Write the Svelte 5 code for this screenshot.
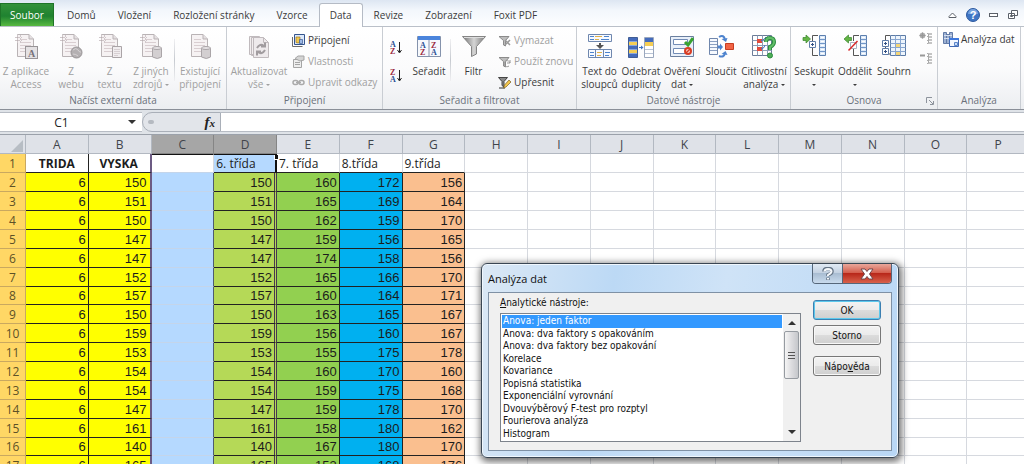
<script>
	const tabs = ['Domů', 'Vložení', 'Rozložení stránky', 'Vzorce', 'Data', 'Revize', 'Zobrazení', 'Foxit PDF'];
	const columns = 'ABCDEFGHIJKLMNOP'.split('');
	const data = [
		[6, 150, '', 150, 160, 172, 156],
		[6, 151, '', 151, 165, 169, 164],
		[6, 150, '', 150, 162, 159, 170],
		[6, 147, '', 147, 159, 156, 165],
		[6, 147, '', 147, 174, 158, 156],
		[6, 152, '', 152, 165, 166, 170],
		[6, 157, '', 157, 160, 164, 171],
		[6, 150, '', 150, 163, 165, 167],
		[6, 159, '', 159, 156, 160, 167],
		[6, 153, '', 153, 155, 175, 178],
		[6, 154, '', 154, 160, 170, 160],
		[6, 154, '', 154, 159, 175, 168],
		[6, 147, '', 147, 159, 178, 170],
		[6, 161, '', 161, 158, 180, 162],
		[6, 140, '', 140, 167, 180, 170],
		[6, 165, '', 165, 153, 168, 176]
	];
	const heads = ['TRIDA', 'VYSKA', '', '6. třída', '7. třída', '8.třída', '9.třída'];
	const tools = [
		'Anova: jeden faktor',
		'Anova: dva faktory s opakováním',
		'Anova: dva faktory bez opakování',
		'Korelace',
		'Kovariance',
		'Popisná statistika',
		'Exponenciální vyrovnání',
		'Dvouvýběrový F-test pro rozptyl',
		'Fourierova analýza',
		'Histogram'
	];

	let activeTab = $state('Data');
	let tool = $state(tools[0]);
	let cellName = $state('C1');
	let formula = $state('');
</script>

{#snippet sheetIcon(kind)}
	<svg width="24" height="26" viewBox="0 0 24 26" fill="none" stroke="#b9b3b5">
		<path d="M3.500 .5H15l4.500 4.500V22.500H3.500z" fill="#f6f2f3" />
		<path d="M15 .5V5h4.500" fill="#e5e0e2" />
		<path d="M6 8.500h11M6 11.500h11M6 14.500h11M6 17.500h11M6 5.500h7" stroke="#d9ced1" />
		{#if kind !== 'existing'}
			<path d="M1 3.500h7M1 6.500h7M3.500 1v8M6.500 1v8" stroke="#cfc6c9" stroke-dasharray="2 1" />
		{/if}
		{#if kind === 'access'}
			<rect x="11.500" y="12.500" width="12" height="12" fill="#e4e1e3" stroke="#989497" />
			<text x="17.500" y="22.500" text-anchor="middle" class="icon-letter" fill="#77727a" stroke="none">A</text>
		{:else if kind === 'web'}
			<circle cx="17.500" cy="18.500" r="5.500" fill="#b4b0b2" stroke="#989496" />
			<path d="M14 16q3-3 5 0t3 2M14 20q3 0 5 2" stroke="#d6d2d4" />
		{:else if kind === 'text'}
			<path d="M14.500 12.500h9v11h-9z" fill="#f1edef" stroke="#aaa4a7" />
			<path d="M16 15.500h6M16 17.500h6M16 19.500h6M16 21.500h4" stroke="#d8d0d3" />
		{:else}
			<path d="M13.500 14v9q5 3 9 0v-9" fill="#d3cfd1" stroke="#aaa5a8" />
			<ellipse cx="18" cy="14" rx="4.500" ry="1.500" fill="#e6e2e4" stroke="#aaa5a8" />
		{/if}
	</svg>
{/snippet}

{#snippet sortIcon(first, second)}
	<svg width="13" height="16" viewBox="0 0 13 16">
		<text x="0" y="8" class="sort-letter" fill={first === 'A' ? '#2c4f95' : '#9b2b3f'}>{first}</text>
		<text x="0" y="15" class="sort-letter" fill={second === 'A' ? '#2c4f95' : '#9b2b3f'}>{second}</text>
		<path d="M9.500 3v10M7.500 11l2 3 2-3" fill="none" stroke="#222" />
	</svg>
{/snippet}

{#snippet funnel()}
	<path d="M1 2.500h10L7.500 6.500V12l-2-1V6.500z" fill="#bdbdbd" stroke="#8b8b8b" />
{/snippet}

{#snippet outlineIcon(kind)}
	<svg width="24" height="26" viewBox="0 0 24 26" fill="none">
		{#if kind === 'sum'}
			<path d="M8.500 1.500h15v20h-15z" fill="#eef5fc" stroke="#5c7ba5" />
			<path d="M8.500 5.500h15M8.500 9.500h15M8.500 13.500h15M8.500 17.500h15M13.500 1.500v20M18.500 1.500v20" stroke="#88a6cf" />
			<path d="M14 10h4v3h-4zM14 18h4v3h-4z" fill="#f3d577" />
			<path d="M8 1.500H3.500V20H8" stroke="#555" />
			<path d="M.5 6.500h6v6h-6zM.5 14.500h6v6h-6z" fill="#fff" stroke="#617da8" />
			<path d="M2 9.500h3M3.500 8v3M2 17.500h3M3.500 16v3" stroke="#335083" />
		{:else}
			<path d="M17.500 1.500h6v20h-6z" fill="#dce9f8" stroke="#5c7fae" />
			<path d="M17.500 5.500h6M17.500 9.500h6M17.500 13.500h6M17.500 17.500h6" stroke="#7196c7" />
			<path d="M19 3.500h3M19 7.500h3M19 11.500h3M19 15.500h3M19 19.500h3" stroke="#fff" />
			<path d="M16 1.500h-5.500V7M10.500 14v7.500H16" stroke="#555" />
			{#if kind === 'group'}
				<path d="M1 3.500h3V1l4.500 4L4 9V6.500H1z" fill="#64b545" stroke="#38842b" stroke-width=".7" />
				<path d="M7.500 7.500h6v6h-6z" fill="#fff" stroke="#6380aa" />
				<path d="M9 10.500h3M10.500 9v3" stroke="#335083" />
			{:else}
				<path d="M8.500 3.500h-3V1L1 5l4.500 4V6.500h3z" fill="#64b545" stroke="#38842b" stroke-width=".7" />
				<path d="M7.500 8.500h6v6h-6z" fill="#fff" stroke="#aab3c0" />
				<path d="M5.500 16.500 14.500 7" stroke="#d92c2c" stroke-width="1.500" />
			{/if}
		{/if}
	</svg>
{/snippet}

{#snippet detailIcon(minus)}
	<svg width="13" height="13" viewBox="0 0 13 13" fill="none" stroke="#aaa">
		<path d="M8 1.500h1.500v10H8M9.500 4.500H8M9.500 8.500H8" />
		<path d="M10 1h3v2h-3zM10 4h3v2h-3zM10 7h3v2h-3zM10 10h3v2h-3z" fill="#c4c4c4" stroke="none" />
		{#if minus}
			<path d="M1 3.500h5" stroke="#999" stroke-width="2" />
		{:else}
			<circle cx="3.500" cy="3.500" r="2.500" fill="#aaa" />
			<path d="M.5 3.500h6M3.500 .5v6" stroke="#999" />
		{/if}
	</svg>
{/snippet}

<div class="excel">
	<nav class="tabs">
		<button class="file" type="button">Soubor</button>
		{#each tabs as tab}
			<button class="tab" class:active={tab === activeTab} type="button" onclick={() => (activeTab = tab)}>{tab}</button>
		{/each}
		<div class="window-tools">
			<button type="button" aria-label="Minimalizovat pás karet">
				<svg width="9" height="8" viewBox="0 0 9 8"><path d="M1 5.500 4.500 2 8 5.500v1H1z" fill="#fff" stroke="#5b6069" /></svg>
			</button>
			<button type="button" aria-label="Nápověda k aplikaci">
				<svg width="14" height="14" viewBox="0 0 14 14">
					<circle cx="7" cy="7" r="6.500" fill="#3f76c4" stroke="#2e5a9e" />
					<path d="M2 6a5 5 0 0 1 10 0z" fill="#78a4df" />
					<text x="7" y="11" text-anchor="middle" class="help-letter" fill="#fff">?</text>
				</svg>
			</button>
			<button type="button" aria-label="Minimalizovat okno">
				<svg width="10" height="6" viewBox="0 0 10 6"><rect x=".5" y="1.500" width="8" height="3" fill="#fff" stroke="#5b6069" /></svg>
			</button>
			<button type="button" aria-label="Obnovit okno">
				<svg width="11" height="10" viewBox="0 0 11 10" fill="#fff" stroke="#5b6069"><path d="M3.500 .5h6v5h-6zM.5 3.500h6v5h-6z" /><path d="M2.500 5.500h2v1h-2z" /></svg>
			</button>
		</div>
	</nav>

	<div class="ribbon">
		<section class="group external">
			<div class="items">
				<button class="big" type="button" disabled>{@render sheetIcon('access')}<span>Z aplikace<br />Access</span></button>
				<button class="big" type="button" disabled>{@render sheetIcon('web')}<span>Z<br />webu</span></button>
				<button class="big" type="button" disabled>{@render sheetIcon('text')}<span>Z<br />textu</span></button>
				<button class="big" type="button" disabled>{@render sheetIcon('other')}<span>Z jiných<br />zdrojů <i class="caret"></i></span></button>
				<i class="divider"></i>
				<button class="big" type="button" disabled>{@render sheetIcon('existing')}<span>Existující<br />připojení</span></button>
			</div>
			<h2>Načíst externí data</h2>
		</section>

		<section class="group connections">
			<div class="items">
				<button class="big" type="button" disabled>
					<svg width="24" height="26" viewBox="0 0 24 26" fill="none" stroke="#c0babd">
						<path d="M2.500 2.500h10v18h-10zM4.500 3.500h11v18h-11z" fill="#f2eeef" />
						<path d="M6.500 3.500h10l5 5v15h-15z" fill="#eeeaec" />
						<path d="M16.500 3.500v5h5" />
						<path d="M10 14q3-5 7-2M18 8.500v4h-4M18 16q-3 5-7 2M10 21.500v-4h4" stroke="#a19c9f" stroke-width="2" />
					</svg>
					<span>Aktualizovat<br />vše <i class="caret"></i></span>
				</button>
				<div class="stack">
					<button class="small" type="button">
						<svg width="13" height="13" viewBox="0 0 13 13">
							<path d="M2.500 .5h10v10h-10z" fill="#dce8fa" stroke="#34558d" />
							<path d="M.5 3v9.500h10" fill="none" stroke="#6d6d6d" />
							<path d="M4 3v5.500q2 1 4 0V3z" fill="#f0c850" stroke="#a17c22" stroke-width=".7" />
							<path d="M7.500 5.500h3v4h-3z" fill="#9db9e6" stroke="#3c5a94" stroke-width=".7" />
						</svg>
						Připojení
					</button>
					<button class="small" type="button" disabled>
						<svg width="13" height="13" viewBox="0 0 13 13" fill="#d4d4d4" stroke="#a5a5a5">
							<path d="M1.500 4.500h8v8h-8z" fill="#eee" /><path d="M3 7.500h5M3 9.500h5" /><path d="M3 3.500 6 1h6v4l-4 1z" />
						</svg>
						Vlastnosti
					</button>
					<button class="small" type="button" disabled>
						<svg width="13" height="13" viewBox="0 0 13 13" fill="none" stroke="#aaa" stroke-width="1.500">
							<rect x="1" y="4.500" width="5" height="4" rx="2" /><rect x="7" y="4.500" width="5" height="4" rx="2" /><path d="M4 6.500h5" />
						</svg>
						Upravit odkazy
					</button>
				</div>
			</div>
			<h2>Připojení</h2>
		</section>

		<section class="group sort">
			<div class="items">
				<div class="sorters">
					<button type="button" aria-label="Seřadit od A do Z">{@render sortIcon('A', 'Z')}</button>
					<button type="button" aria-label="Seřadit od Z do A">{@render sortIcon('Z', 'A')}</button>
				</div>
				<button class="big" type="button">
					<svg width="24" height="26" viewBox="0 0 24 26">
						<path d="M.5 2.500h23v20H.5z" fill="#f7f9fd" stroke="#8593ac" />
						<path d="M1 2h22v4H1z" fill="#4a84dc" />
						<path d="M12 6v16" stroke="#8593ac" />
						<text x="3" y="14" class="sort-letter" fill="#2c4f95">A</text><text x="3" y="21" class="sort-letter" fill="#9b2b3f">Z</text>
						<text x="14" y="14" class="sort-letter" fill="#9b2b3f">Z</text><text x="14" y="21" class="sort-letter" fill="#2c4f95">A</text>
					</svg>
					<span>Seřadit</span>
				</button>
				<i class="divider"></i>
				<button class="big" type="button">
					<svg width="24" height="26" viewBox="0 0 24 26">
						<defs><linearGradient id="funnel"><stop stop-color="#707070" /><stop offset=".5" stop-color="#d5d5d5" /><stop offset="1" stop-color="#777" /></linearGradient></defs>
						<path d="M.5 2.500h23l-9 10V20l-5 2.500v-10z" fill="url(#funnel)" stroke="#858585" />
						<path d="M2 3.500h20" stroke="#ddd" />
					</svg>
					<span>Filtr</span>
				</button>
				<div class="stack">
					<button class="small" type="button" disabled>
						<svg width="13" height="13" viewBox="0 0 13 13">{@render funnel()}<path d="m7 6 5 5m0-5-5 5" stroke="#999" stroke-width="1.500" /></svg>
						Vymazat
					</button>
					<button class="small" type="button" disabled>
						<svg width="13" height="13" viewBox="0 0 13 13">{@render funnel()}<path d="M12 8a3 3 0 1 0-1 3M12 5v3H9" fill="none" stroke="#999" /></svg>
						Použít znovu
					</button>
					<button class="small" type="button">
						<svg width="13" height="13" viewBox="0 0 13 13">
							<path d="M.5 1.500h9L6 5.500V11L4 9.500v-4z" fill="#888" stroke="#444" /><path d="M1 12h6" stroke="#333" />
							<path d="m5.500 12 1-3 4.500-5 2 2-5 5z" fill="#f3c64c" stroke="#7a6022" stroke-width=".7" />
						</svg>
						Upřesnit
					</button>
				</div>
			</div>
			<h2>Seřadit a filtrovat</h2>
		</section>

		<section class="group datatools">
			<div class="items">
				<button class="big" type="button">
					<svg width="24" height="26" viewBox="0 0 24 26" fill="#f7faff" stroke="#6f87ae">
						<path d="M.5 .5h23v7H.5zM.5 15.500h23v8H.5z" />
						<path d="M2 2.500h4M16 2.500h5M2 5.500h4M13 5.500h8M2 18.500h4M17 18.500h5M2 21.500h4M17 21.500h4" stroke="#4d84ce" />
						<path d="M7 2.500h7M7 5.500h4M9 18.500h5M9 21.500h4" stroke="#e0b14b" />
						<path d="M7.500 16v7M15.500 16v7" />
						<path d="M11 9h2v2h3l-4 4-4-4h3z" fill="#555" stroke="none" />
					</svg>
					<span>Text do<br />sloupců</span>
				</button>
				<button class="big" type="button">
					<svg width="26" height="26" viewBox="0 0 26 26">
						<path d="M.5 3.500h9v20h-9z" fill="#446bbc" stroke="#405d94" />
						<path d="M1 8h8v3H1zM1 16h8v3H1z" fill="#f5ce55" />
						<path d="M1 7.500h8M1 11.500h8M1 15.500h8M1 19.500h8" stroke="#8ca8dc" />
						<path d="M16.500 3.500h9v20h-9z" fill="#fff" stroke="#9aa7bd" />
						<path d="M17 4h8v4h-8z" fill="#446bbc" /><path d="M17 8h8v4h-8z" fill="#f5ce55" />
						<path d="M17 15.500h8M17 19.500h8" stroke="#b8c3d5" />
						<path d="M11 13h2v-1.500l2.500 2-2.500 2V14h-2z" fill="#3c73c5" />
					</svg>
					<span>Odebrat<br />duplicity</span>
				</button>
				<button class="big" type="button">
					<svg width="24" height="26" viewBox="0 0 24 26" fill="none">
						<path d="M.5 2.500h23v20H.5z" fill="#e8eff9" stroke="#6a7f9f" />
						<path d="M3.500 5.500h14v5h-14zM3.500 14.500h12v5h-12z" fill="#fff" stroke="#718bb5" />
						<path d="m15 8 3 3 5-7" stroke="#38a330" stroke-width="3" />
						<circle cx="18" cy="17" r="3" fill="#f8d2c8" stroke="#d83d24" stroke-width="2" /><path d="m16 19 4-4" stroke="#d83d24" stroke-width="1.500" />
					</svg>
					<span>Ověření<br />dat <i class="caret"></i></span>
				</button>
				<button class="big" type="button">
					<svg width="26" height="26" viewBox="0 0 26 26" fill="none">
						<path d="M1.500 4.500h8v16h-8z" fill="#f6f9fe" stroke="#7087ad" />
						<path d="M2 7.500h7M2 10.500h7M2 13.500h7M2 16.500h7" stroke="#8ba0c2" />
						<path d="M11 3q5-3 6 3M11 22q5 2 6-3" stroke="#4e83ce" stroke-width="2" />
						<path d="m13.500 5 6-1-1.500 4zM13.500 20l4-3 2 4zM10 11.500h2v-2l3 3.500-3 3.500v-2h-2z" fill="#4e83ce" />
						<path d="M17.500 9.500h8v6h-8z" fill="#f16445" stroke="#c63d22" />
					</svg>
					<span>Sloučit</span>
				</button>
				<button class="big" type="button">
					<svg width="24" height="26" viewBox="0 0 24 26" fill="none">
						<path d="M.5 1.500h19v20H.5z" fill="#fff" stroke="#6b7c98" />
						<path d="M.5 6.500h19M.5 11.500h19M.5 16.500h19M5.500 1.500v20M10.500 1.500v20M15.500 1.500v20" stroke="#8d9db7" />
						<path d="M5 5h5v4H5zM5 13h5v4H5z" fill="#e14a3c" />
						<path d="M9 7q4-2 5-4M9 15q4-1 4-4" stroke="#4472c4" />
						<path d="M14 8q0-4 4-4t4 4q0 3-4 5v3" stroke="#2b8c3e" stroke-width="4" />
						<path d="M14 8q0-4 4-4t4 4q0 3-4 5v3" stroke="#62bd68" stroke-width="2" />
						<circle cx="18" cy="21.500" r="2.500" fill="#4dad57" stroke="#2b8c3e" />
					</svg>
					<span>Citlivostní<br />analýza <i class="caret"></i></span>
				</button>
			</div>
			<h2>Datové nástroje</h2>
		</section>

		<section class="group outline">
			<div class="items">
				<button class="big" type="button">{@render outlineIcon('group')}<span>Seskupit<br /><i class="caret"></i></span></button>
				<button class="big" type="button">{@render outlineIcon('ungroup')}<span>Oddělit<br /><i class="caret"></i></span></button>
				<button class="big" type="button">{@render outlineIcon('sum')}<span>Souhrn</span></button>
				<div class="details">
					<button type="button" aria-label="Zobrazit podrobnosti" disabled>{@render detailIcon(false)}</button>
					<button type="button" aria-label="Skrýt podrobnosti" disabled>{@render detailIcon(true)}</button>
				</div>
			</div>
			<h2>Osnova</h2>
			<button class="launcher" type="button" aria-label="Nastavení osnovy">
				<svg width="8" height="8" viewBox="0 0 8 8" fill="none" stroke="#8d939c"><path d="M.5 6V.5H6M3 3l4 4M7.500 4v3.500H4" /></svg>
			</button>
		</section>

		<section class="group analysis">
			<div class="items">
				<button class="small" type="button">
					<svg width="17" height="16" viewBox="0 0 17 16">
						<path d="M.5 .5h3v11h-3zM3.500 2.500h3v9h-3zM6.500 .5h3v11h-3z" fill="#9db1d3" stroke="#627ba7" />
						<path d="M1 3.500h8M1 6.500h8" stroke="#d7e0ef" />
						<path d="M6.500 6.500h9v8h-9z" fill="#f4f8ff" stroke="#4069b4" /><path d="M6 6h10v2H6z" fill="#3f78dc" /><path d="M11.500 10.500h3v3h-3z" fill="#c7dcfb" stroke="#5d86c8" />
					</svg>
					Analýza dat
				</button>
			</div>
			<h2>Analýza</h2>
		</section>
	</div>

	<div class="formula-bar">
		<div class="name-box">
			<input aria-label="Pole názvů" bind:value={cellName} />
			<button type="button" aria-label="Vybrat název"><i class="arrow"></i></button>
		</div>
		<div class="fx">
			<i class="knob"></i>
			<button type="button" aria-label="Vložit funkci"><em>f</em><em class="sub">x</em></button>
		</div>
		<input class="formula" aria-label="Řádek vzorců" bind:value={formula} />
	</div>

	<div class="sheet">
		<table>
			<thead>
				<tr>
					<th class="corner" aria-label="Vybrat vše"><svg width="12" height="12" viewBox="0 0 12 12"><path d="M12 0v12H0z" fill="#b7bdc4" /></svg></th>
					{#each columns as col}
						<th class:picked={col === 'C' || col === 'D'}>{col}</th>
					{/each}
				</tr>
			</thead>
			<tbody>
				<tr class="heads">
					<th>1</th>
					{#each columns as col, i}
						<td class="col-{col}">{heads[i] ?? ''}{#if col === 'D'}<i class="handle"></i>{/if}</td>
					{/each}
				</tr>
				{#each data as row, r}
					<tr>
						<th>{r + 2}</th>
						{#each columns as col, i}
							<td class="col-{col}">{row[i] ?? ''}</td>
						{/each}
					</tr>
				{/each}
			</tbody>
		</table>
	</div>

	<div class="dialog" role="dialog" aria-labelledby="dialog-title">
		<header>
			<h1 id="dialog-title">Analýza dat</h1>
			<div class="caption">
				<button type="button" aria-label="Kontextová nápověda">
					<svg width="12" height="14" viewBox="0 0 12 14" fill="none"><path d="M2 4.500q0-3 4-3t4 3q0 2-4 3.500V9M6 10.500v2.500" stroke="#667586" stroke-width="3.500" /><path d="M2.500 4.500q0-2.500 3.500-2.500t3.500 2.500Q9.500 6 6 8v1M6 11v1.500" stroke="#f5f8fb" stroke-width="2" /></svg>
				</button>
				<button class="close" type="button" aria-label="Zavřít">
					<svg width="14" height="12" viewBox="0 0 14 12"><path d="M1 1h4l2 2.500L9 1h4L9.500 6l3.500 5H9L7 8.500 5 11H1l3.500-5z" fill="#fff" stroke="#71464a" /></svg>
				</button>
			</div>
		</header>
		<div class="body">
			<div class="list-side">
				<label for="tools"><u>A</u>nalytické nástroje:</label>
				<div class="list">
					<select id="tools" size="10" bind:value={tool}>
						{#each tools as name}
							<option value={name}>{name}</option>
						{/each}
					</select>
					<div class="scroll">
						<button type="button" aria-label="Nahoru"><i class="arrow up"></i></button>
						<div class="thumb"><i></i><i></i><i></i></div>
						<button class="down" type="button" aria-label="Dolů"><i class="arrow"></i></button>
					</div>
				</div>
			</div>
			<div class="actions">
				<button class="default" type="button">OK</button>
				<button type="button">Storno</button>
				<button class="help" type="button">Nápo<u>v</u>ěda</button>
			</div>
		</div>
	</div>
</div>

<style>
	:global(body) {
		margin: 0;
	}
	.excel {
		position: relative;
		height: 100vh;
		overflow: hidden;
		display: flex;
		flex-direction: column;
		background: #fff;
		color: #3b3b3b;
		font: 10px/13px 'Open Sans', 'Noto Sans', sans-serif;
	}
	.excel * {
		box-sizing: border-box;
	}
	button,
	input,
	select {
		margin: 0;
		padding: 0;
		border: 0;
		background: none;
		color: inherit;
		font: inherit;
	}
	svg {
		display: block;
		flex: none;
	}
	h1,
	h2 {
		margin: 0;
		font-size: 10px;
		font-weight: normal;
	}

	.tabs {
		display: flex;
		flex: none;
		align-items: flex-end;
		height: 27px;
		border-bottom: 1px solid #bac0c9;
		background: linear-gradient(#dde6f2, #f3f7fc 40%, #fdfeff);
	}
	.file {
		width: 54px;
		height: 23px;
		margin-right: 2px;
		border: 1px solid #1e7428;
		border-bottom: 0;
		background: linear-gradient(#33913a, #1f8230 55%, #58b941);
		color: #fff;
	}
	.tab {
		height: 23px;
		padding: 0 10px;
		border: 1px solid transparent;
		border-bottom: 0;
		white-space: nowrap;
	}
	.tab.active {
		margin-bottom: -1px;
		height: 24px;
		border-color: #b5bbc5;
		border-radius: 3px 3px 0 0;
		background: #fff;
	}
	.window-tools {
		display: flex;
		align-items: center;
		gap: 9px;
		height: 23px;
		margin-left: auto;
		padding-right: 5px;
	}

	.ribbon {
		display: flex;
		flex: none;
		height: 83px;
		border-bottom: 1px solid #8a8f98;
		background: linear-gradient(#fff, #fbfbfc 50%, #eceef1);
	}
	.group {
		position: relative;
		display: flex;
		flex-direction: column;
		flex: none;
		border-right: 1px solid #c9cdd3;
	}
	.group h2 {
		height: 15px;
		color: #6b717b;
		text-align: center;
	}
	.items {
		display: grid;
		flex: 1;
		padding: 0 1px;
	}
	.external .items {
		grid-template-columns: 50px 40px 37px 46px 1px 50px;
	}
	.connections .items {
		grid-template-columns: 62px 91px;
	}
	.sort .items {
		grid-template-columns: 24px 42px 1px 45px 79px;
	}
	.datatools .items {
		grid-template-columns: 43px 40px 42px 36px 50px;
	}
	.outline .items {
		grid-template-columns: 44px 38px 40px 22px;
	}
	.analysis {
		width: 83px;
	}
	.big {
		display: flex;
		flex-direction: column;
		align-items: center;
		gap: 5px;
		padding-top: 7px;
		white-space: nowrap;
	}
	.big,
	.small {
		color: #3b3b3b;
	}
	button:disabled {
		color: #a0a0a0;
	}
	.small {
		display: flex;
		align-items: center;
		gap: 3px;
		height: 21px;
		white-space: nowrap;
	}
	.stack {
		padding: 3px 0 0 2px;
	}
	.analysis .small {
		gap: 1px;
		margin-top: 2px;
		padding-left: 4px;
	}
	.sorters {
		display: grid;
		align-content: start;
		justify-items: center;
		gap: 12px;
		padding-top: 12px;
	}
	.details {
		display: grid;
		align-content: start;
		justify-items: center;
		gap: 7px;
		padding-top: 5px;
	}
	.divider {
		height: 42px;
		margin-top: 12px;
		background: linear-gradient(#f0f0f2, #c6cad0, #f0f0f2);
	}
	.caret {
		display: inline-block;
		border: 2px solid transparent;
		border-top-color: currentColor;
		border-bottom: 0;
		vertical-align: middle;
	}
	.launcher {
		position: absolute;
		right: 3px;
		bottom: 4px;
	}
	.icon-letter {
		font: bold 10px 'Liberation Serif', serif;
	}
	.sort-letter {
		font: bold 8px 'Liberation Serif', serif;
	}
	.help-letter {
		font: bold 11px 'Liberation Sans', sans-serif;
	}

	.formula-bar {
		display: flex;
		flex: none;
		height: 25px;
		padding: 2px 0;
		border-bottom: 1px solid #9ba1aa;
		background: #dfe3e8;
	}
	.name-box {
		display: flex;
		width: 142px;
		border: solid #b7bcc4;
		border-width: 1px 0;
		background: #fff;
	}
	.name-box input {
		width: 128px;
		padding-right: 5px;
		color: #222;
		font-size: 12px;
		text-align: center;
	}
	.arrow {
		display: block;
		border: 4px solid transparent;
		border-top-color: #333;
		border-bottom: 0;
	}
	.fx {
		display: flex;
		align-items: center;
		justify-content: space-between;
		width: 79px;
		padding: 0 5px;
		border: 1px solid #a9afb8;
		border-radius: 10px 0 0 10px;
		background: #e2e5ea;
	}
	.knob {
		width: 6px;
		height: 4px;
		border-radius: 2px;
		background: #b5bac1;
	}
	.fx em {
		color: #222;
		font: italic bold 15px/16px 'Liberation Serif', serif;
	}
	.fx .sub {
		font-size: 11px;
	}
	.formula {
		flex: 1;
		min-width: 0;
		padding: 0 4px;
		border: solid #b7bcc4;
		border-width: 1px 0;
		background: #fff;
	}

	.sheet {
		flex: 1;
		min-height: 0;
		overflow: hidden;
	}
	table {
		width: calc(100% + 6px);
		table-layout: fixed;
		border-collapse: separate;
		border-spacing: 0;
	}
	th,
	td {
		height: 19px;
		padding: 0 2px;
		overflow: hidden;
		border-right: 1px solid #d6d9df;
		border-bottom: 1px solid #d6d9df;
		line-height: 17px;
		white-space: nowrap;
	}
	td {
		color: #1c1c1c;
		font-family: 'Liberation Sans', Arial, sans-serif;
		font-size: 13px;
		text-align: right;
	}
	th {
		padding: 0;
		border-color: #b2b8c1;
		background: #dfe2e8;
		color: #40444b;
		font-family: 'Open Sans', sans-serif;
		font-size: 12px;
		font-weight: normal;
		text-align: center;
	}
	thead th.picked {
		border-color: #858585;
		background: #a6a6a6;
	}
	.corner {
		width: 26px;
	}
	.corner svg {
		margin: 3px 2px 0 auto;
	}
	tbody th {
		border-color: #c9a860;
		background: #ffd765;
		color: #5d5127;
	}
	tbody tr:nth-child(8n) :is(th, td) {
		height: 18px;
		line-height: 16px;
	}
	.col-A,
	.col-B,
	.col-D,
	.col-E,
	.col-F,
	.col-G {
		border-color: #222;
	}
	.col-A,
	.col-B {
		background: #ff0;
	}
	.col-B {
		border-right: 2px solid #6c5b83;
		padding-right: 3px;
	}
	.col-C {
		border-color: #c4d5ea;
		border-right-color: #4d5c70;
		background: #b5d9ff;
	}
	.col-D {
		border-right: 3px double #47394f;
		background: #b5d957;
	}
	.col-E {
		background: #92d050;
	}
	.col-F {
		background: #00b0f0;
	}
	.col-G {
		background: #fabf8f;
	}
	.heads td {
		font-family: 'Open Sans', sans-serif;
		font-size: 12px;
		text-align: left;
	}
	.heads :is(.col-A, .col-B) {
		background: #fff;
		font-weight: bold;
		text-align: center;
	}
	.heads :is(.col-C, .col-D) {
		border-top: 1px solid #111;
	}
	.heads .col-C {
		border-right-color: #d6d9df;
		background: #fff;
	}
	.heads .col-D {
		position: relative;
		overflow: visible;
		border-right: 2px solid #111;
		background: #b5d9ff;
	}
	.heads :is(.col-E, .col-F, .col-G) {
		border-right-color: #d6d9df;
		background: #fff;
	}
	.handle {
		position: absolute;
		top: 0;
		right: -4px;
		width: 5px;
		height: 5px;
		border: 1px solid #fff;
		border-top: 0;
		background: #111;
	}

	.dialog {
		position: absolute;
		top: 263px;
		left: 481px;
		width: 418px;
		padding: 0 6px 6px;
		border: 1px solid #3a4653;
		border-radius: 6px;
		background: linear-gradient(100deg, #dbe8f5, #bcd9f5 30%, #cfe3f7 55%, #b9d7f5);
		box-shadow: inset 0 0 0 1px #f0f7fd, 1px 2px 7px 2px rgba(0, 0, 0, 0.55);
		color: #111;
		font: 10px/13px 'DejaVu Sans Condensed', 'DejaVu Sans', sans-serif;
	}
	.dialog header {
		display: flex;
		justify-content: space-between;
		height: 28px;
	}
	.dialog h1 {
		font: 11px/29px 'Open Sans', sans-serif;
	}
	.caption {
		display: flex;
		height: 20px;
		border: 1px solid #56677a;
		border-top: 0;
		border-radius: 0 0 4px 4px;
		overflow: hidden;
	}
	.caption button {
		display: grid;
		place-items: center;
		width: 29px;
		background: linear-gradient(#e1eaf4, #c4d2e2 45%, #a9bdd2 50%, #c9dbed);
	}
	.caption .close {
		width: 49px;
		border-left: 1px solid #56677a;
		background: linear-gradient(#e9a79b, #d4604f 45%, #b8281a 50%, #d8614b);
	}
	.body {
		display: flex;
		gap: 12px;
		height: 159px;
		padding: 3px 10px 8px 11px;
		border: 1px solid #7f91a5;
		background: #f0f0f0;
	}
	.list-side {
		flex: 1;
		display: flex;
		flex-direction: column;
		gap: 4px;
	}
	.list {
		display: flex;
		height: 129px;
		border: 1px solid #7d838c;
		background: #fff;
	}
	.list select {
		flex: 1;
		padding: 1px;
		overflow: hidden;
		outline: 0;
	}
	option {
		height: 13px;
		min-height: 13px;
		padding: 0 1px;
		line-height: 13px;
	}
	option:nth-child(even) {
		height: 12px;
		min-height: 12px;
		line-height: 12px;
	}
	option:checked {
		background: linear-gradient(#3399ff, #3399ff);
		color: #fff;
	}
	.scroll {
		display: flex;
		flex-direction: column;
		width: 17px;
		padding: 1px;
		background: #f0f0f0;
	}
	.scroll button {
		display: grid;
		place-items: center;
		height: 16px;
	}
	.up {
		transform: rotate(180deg);
	}
	.scroll .down {
		margin-top: auto;
	}
	.thumb {
		display: grid;
		align-content: center;
		justify-content: center;
		gap: 2px;
		height: 48px;
		border: 1px solid #969ba1;
		border-radius: 2px;
		background: linear-gradient(90deg, #f5f5f5, #dcdcdf 50%, #c5c7cb);
	}
	.thumb i {
		width: 7px;
		height: 1px;
		background: #555;
	}
	.actions {
		display: flex;
		flex-direction: column;
		gap: 5px;
		width: 68px;
		padding-top: 4px;
	}
	.actions button {
		height: 20px;
		border: 1px solid #777;
		border-radius: 3px;
		background: linear-gradient(#f3f3f3, #ebebeb 50%, #dcdcdc 51%, #cfcfcf);
		box-shadow: inset 0 0 0 1px #f8f8f8;
	}
	.actions .default {
		border-color: #3c7fb1;
		box-shadow: inset 0 0 0 1px #5cc8ec;
	}
	.actions .help {
		margin-top: 6px;
	}
</style>
